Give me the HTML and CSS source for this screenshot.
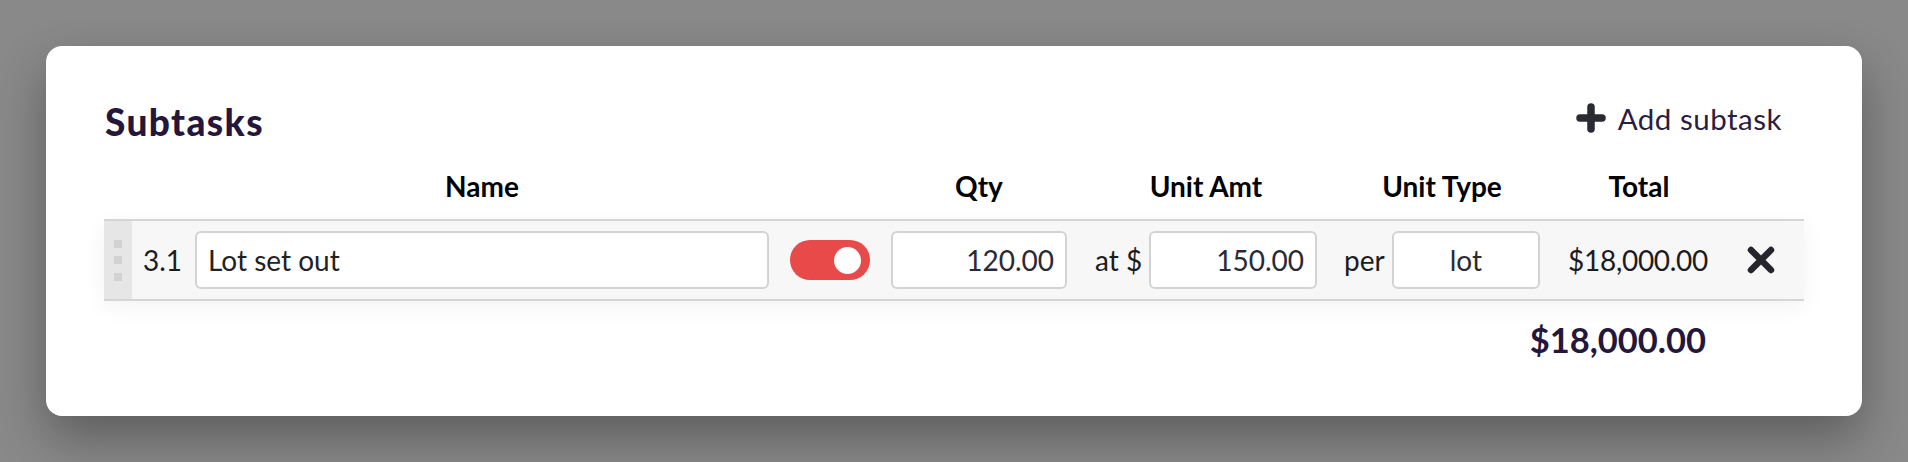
FILE: index.html
```html
<!DOCTYPE html>
<html>
<head>
<meta charset="utf-8">
<link rel="stylesheet" href="styles.css">
</head>
<body>
<div class="card">
  <div class="title-row">
    <h2 class="title">Subtasks</h2>
    <button class="add-btn">
      <svg class="plus" width="30" height="30" viewBox="0 0 30 30"><path d="M15 4V26M4 15H26" stroke="#2a2a33" stroke-width="7.5" stroke-linecap="round"/></svg>
      <span>Add subtask</span>
    </button>
  </div>
  <div class="grid head">
    <div class="h-cell"></div>
    <div class="h-cell"></div>
    <div class="h-cell center">Name</div>
    <div class="h-cell"></div>
    <div class="h-cell center">Qty</div>
    <div class="h-cell group-amt center">Unit Amt</div>
    <div class="h-cell group-type center">Unit Type</div>
    <div class="h-cell group-total center">Total</div>
    <div class="h-cell"></div>
  </div>
  <div class="grid row">
    <div class="handle"><span></span><span></span><span></span></div>
    <div class="num">3.1</div>
    <div class="field name">Lot set out</div>
    <div class="toggle-cell"><div class="toggle"><div class="knob"></div></div></div>
    <div class="field right">120.00</div>
    <div class="group-amt pair"><span class="lbl">at $</span><div class="field right amt">150.00</div></div>
    <div class="group-type pair"><span class="lbl">per</span><div class="field center type">lot</div></div>
    <div class="total">$18,000.00</div>
    <div class="del">
      <svg width="30" height="30" viewBox="0 0 30 30"><path d="M5 5L25 25M25 5L5 25" stroke="#25252b" stroke-width="6.5" stroke-linecap="round"/></svg>
    </div>
  </div>
  <div class="footer">
    <div class="grand">$18,000.00</div>
  </div>
</div>
</body>
</html>
```
FILE: styles.css
```css
* { box-sizing: border-box; }
html, body { margin: 0; padding: 0; }
body {
  background: #898989;
  padding: 46px;
  font-family: Lato, "Noto Sans", sans-serif;
  height: 462px;
  overflow: hidden;
}
.card {
  background: #fff;
  border-radius: 16px;
  width: 1816px;
  height: 370px;
  padding: 54px 58px 0 58px;
  box-shadow: 0 22px 50px rgba(0,0,0,0.32);
}
.title-row {
  display: flex;
  justify-content: space-between;
  align-items: center;
  height: 44px;
}
.title {
  margin: 0;
  font-family: Lato, sans-serif;
  font-weight: 900;
  font-size: 37px;
  letter-spacing: 1.4px;
  line-height: 44px;
  color: #25173b;
  padding-left: 1px;
}
.add-btn {
  display: flex;
  align-items: center;
  gap: 12px;
  border: 0;
  background: none;
  padding: 0;
  margin-right: 22px;
  margin-top: -8px;
  font-family: Lato, sans-serif;
  font-size: 29.5px;
  letter-spacing: 0.5px;
  color: #2b1d40;
}
.plus { display: block; }
.grid {
  display: grid;
  grid-template-columns: 28px 63px 574px 122px 176px 250px 223px 168px 96px;
}
.head {
  margin-top: 22px;
  height: 40px;
  line-height: 40px;
  font-size: 28px;
  font-weight: 700;
  color: #000;
  margin-bottom: 13px;
}
.center { text-align: center; }
.right { text-align: right; }
.group-amt { width: 222px; justify-self: end; }
.group-type { width: 196px; justify-self: end; }
.group-total { width: 138px; justify-self: end; }
.row {
  height: 82px;
  background: #f7f7f7;
  border-top: 2px solid #d5d5d5;
  border-bottom: 2px solid #d5d5d5;
  box-shadow: 0 6px 22px rgba(0,0,0,0.05);
  align-items: center;
  font-size: 28px;
  color: #1c1c1f;
}
.handle {
  align-self: stretch;
  background: #e6e6e6;
  display: flex;
  flex-direction: column;
  align-items: center;
  justify-content: center;
  gap: 8.5px;
}
.handle span {
  width: 8px;
  height: 8px;
  background: #d2d2d2;
}
.num { padding-left: 11px; }
.field {
  height: 58px;
  line-height: 54px;
  background: #fff;
  border: 2px solid #d3d3d3;
  border-radius: 6px;
  padding: 0 11px;
  color: #2a2a33;
}
.name { color: #222; }
.toggle-cell { display: flex; justify-content: center; }
.toggle {
  width: 80px;
  height: 40px;
  border-radius: 20px;
  background: #e84a4a;
  display: flex;
  align-items: center;
  justify-content: flex-end;
  padding-right: 9px;
}
.knob {
  width: 27px;
  height: 27px;
  border-radius: 50%;
  background: #fff;
}
.pair {
  display: flex;
  align-items: center;
  gap: 7px;
}
.lbl { white-space: nowrap; }
.amt { flex: 1; }
.type { flex: 1; }
.total { text-align: right; white-space: nowrap; letter-spacing: -0.3px; }
.del { padding-left: 38px; display: flex; align-items: center; }
.del svg { display: block; }
.footer {
  display: flex;
  justify-content: flex-end;
  padding-right: 98px;
  margin-top: 17px;
}
.grand {
  font-size: 34.5px;
  font-weight: 700;
  line-height: 44px;
  color: #25173b;
}
```
